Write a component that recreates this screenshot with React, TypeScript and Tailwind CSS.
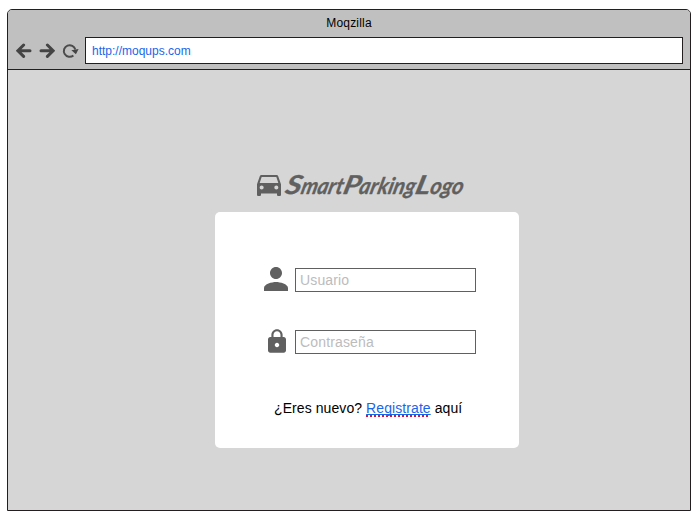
import React from "react";

const sans = "font-['Liberation_Sans',Arial,sans-serif]";

function BackArrow() {
  return (
    <svg className="h-4 w-4" viewBox="0 0 16 16" fill="none" stroke="#444" strokeWidth="3">
      <path d="M7.6 2 1.9 7.7l5.7 5.7M2.2 7.7H14" strokeLinecap="round" strokeLinejoin="miter" />
    </svg>
  );
}

function ForwardArrow() {
  return (
    <svg className="h-4 w-4" viewBox="0 0 16 16" fill="none" stroke="#444" strokeWidth="3">
      <path d="M8.4 2 14.1 7.7l-5.7 5.7M13.8 7.7H2" strokeLinecap="round" strokeLinejoin="miter" />
    </svg>
  );
}

function ReloadIcon() {
  return (
    <svg className="h-4 w-4 overflow-visible" viewBox="0 0 16 16" fill="none">
      <path d="M10.4 12.4A5.8 5.8 0 1 1 12.3 6.6" stroke="#4c4c4c" strokeWidth="2" />
      <path d="M8.4 7.2 15.6 6 12.9 11.2Z" fill="#444" />
    </svg>
  );
}

function CarIcon() {
  return (
    <svg className="h-[21px] w-6 shrink-0" viewBox="3 5 18 16" preserveAspectRatio="none" fill="#606060">
      <path d="M18.92 6.01C18.72 5.42 18.16 5 17.5 5h-11c-.66 0-1.21.42-1.42 1.01L3 12v8c0 .55.45 1 1 1h1c.55 0 1-.45 1-1v-1h12v1c0 .55.45 1 1 1h1c.55 0 1-.45 1-1v-8l-2.08-5.99zM6.5 16c-.83 0-1.5-.67-1.5-1.5S5.67 13 6.5 13s1.5.67 1.5 1.5S7.33 16 6.5 16zm11 0c-.83 0-1.5-.67-1.5-1.5s.67-1.5 1.5-1.5 1.5.67 1.5 1.5-.67 1.5-1.5 1.5zM5 11l1.5-4.5h11L19 11H5z" />
    </svg>
  );
}

function PersonIcon() {
  return (
    <svg className="h-6 w-6" viewBox="4 4 16 16" fill="#606060">
      <path d="M12 12c2.21 0 4-1.79 4-4s-1.79-4-4-4-4 1.79-4 4 1.79 4 4 4zm0 2c-2.67 0-8 1.34-8 4v2h16v-2c0-2.66-5.33-4-8-4z" />
    </svg>
  );
}

function LockIcon() {
  return (
    <svg className="ml-[2px] h-6 w-[18px]" viewBox="4 1 16 21" fill="#606060">
      <path d="M18 8h-1V6c0-2.76-2.24-5-5-5S7 3.24 7 6v2H6c-1.1 0-2 .9-2 2v10c0 1.1.9 2 2 2h12c1.1 0 2-.9 2-2V10c0-1.1-.9-2-2-2zm-6 9c-1.1 0-2-.9-2-2s.9-2 2-2 2 .9 2 2-.9 2-2 2zm3.1-9H8.9V6c0-1.71 1.39-3.1 3.1-3.1 1.71 0 3.1 1.39 3.1 3.1v2z" />
    </svg>
  );
}

function Field({ icon, label, type }: { icon: React.ReactNode; label: string; type: string }) {
  return (
    <label className="flex h-6 items-center">
      <span className="-mt-0.5 mr-[7px] flex w-6 shrink-0 justify-center">{icon}</span>
      <input
        type={type}
        placeholder={label}
        className="h-6 w-[181px] border border-[#606060] bg-white px-1 text-sm leading-none tracking-[0.15px] text-[#333] outline-none placeholder:text-[#bcbcbc]"
      />
    </label>
  );
}

function Logo() {
  return (
    <div className="ml-[42px] flex h-[30px] items-start">
      <CarIcon />
      <svg className="-mt-1 h-9 w-[190px] shrink-0 overflow-visible" viewBox="0 0 190 36">
        <text
          y="0"
          transform="translate(0 23) skewX(-14)"
          fill="#606060"
          stroke="#606060"
          strokeWidth="0.3"
          strokeLinejoin="round"
          className="font-['Lato',sans-serif] text-[23px] font-bold italic"
        >
          <tspan x="3" textLength="16" lengthAdjust="spacingAndGlyphs" className="text-[26px]">S</tspan>
          <tspan x="19" textLength="42" lengthAdjust="spacingAndGlyphs">mart</tspan>
          <tspan x="61" textLength="17" lengthAdjust="spacingAndGlyphs" className="text-[26px]">P</tspan>
          <tspan x="77" textLength="56" lengthAdjust="spacingAndGlyphs">arking</tspan>
          <tspan x="133" textLength="15" lengthAdjust="spacingAndGlyphs" className="text-[26px]">L</tspan>
          <tspan x="148" textLength="33" lengthAdjust="spacingAndGlyphs">ogo</tspan>
        </text>
      </svg>
    </div>
  );
}

export default function App() {
  return (
    <div className={`h-[519px] w-[698px] bg-white pl-[7px] pt-[9px] ${sans}`}>
      <div className="flex h-[502px] w-[684px] flex-col overflow-hidden rounded-t-[5px] border border-[#231f20] bg-[#d6d6d6]">
        <header className="flex h-[60px] shrink-0 flex-col border-b border-[#231f20] bg-[#c0c0c0]">
          <div className="flex h-[27px] items-center justify-center pb-0.5 text-xs tracking-[0.2px] text-black">Moqzilla</div>
          <nav className="flex h-[27px] items-center pl-2">
            <BackArrow />
            <span className="ml-[7px] flex"><ForwardArrow /></span>
            <span className="ml-2 flex"><ReloadIcon /></span>
            <div className="ml-[6px] flex h-[27px] w-[598px] items-center border border-[#231f20] bg-white px-1.5 text-xs text-[#1a66e8]">
              http://moqups.com
            </div>
          </nav>
        </header>
        <main className="ml-[207px] w-[304px] pt-[105px]">
          <Logo />
          <section className="mt-[7px] flex h-[236px] flex-col rounded-[5px] bg-white pl-[49px] pt-14">
            <Field icon={<PersonIcon />} label="Usuario" type="text" />
            <div className="mt-[38px]">
              <Field icon={<LockIcon />} label="Contraseña" type="password" />
            </div>
            <p className="ml-[10px] mt-11 whitespace-nowrap text-sm leading-5 tracking-[0.08px] text-black">
              ¿Eres nuevo?{" "}
              <span className="underline decoration-[#e01030] decoration-dotted decoration-2 underline-offset-2 [text-decoration-skip-ink:none]">
                <a className="text-[#1a66e8] underline decoration-[#1a66e8] decoration-solid decoration-1 underline-offset-1 [text-decoration-skip-ink:none]">Registrate</a>
              </span>{" "}
              aquí
            </p>
          </section>
        </main>
      </div>
    </div>
  );
}
